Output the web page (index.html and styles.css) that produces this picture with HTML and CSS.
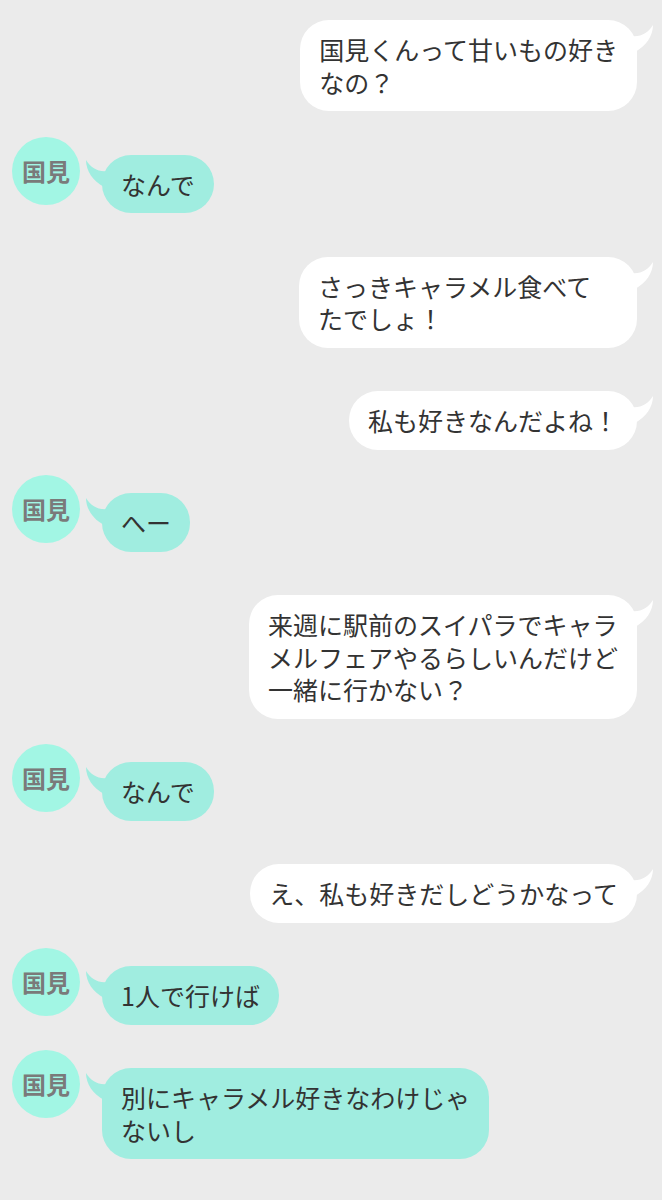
FILE: index.html
```html
<!DOCTYPE html>
<html lang="ja">
  <head>
    <meta charset="utf-8">
    <title>トーク</title>
    <link rel="stylesheet" href="styles.css">
  </head>
  <body>
    <div class="chat">
      <div class="row me">
        <div class="bubble">国見くんって甘いもの好き<br>なの？<svg class="tail" viewBox="0 0 28 30"><path d="M0 12 C10 17 21 13 27 3 C27 14 20 24 9 30 L0 30 Z"/></svg></div>
      </div>

      <div class="row them">
        <div class="avatar">国見</div>
        <div class="bubble">なんで<svg class="tail" viewBox="0 0 28 30"><path d="M0 12 C10 17 21 13 27 3 C27 14 20 24 9 30 L0 30 Z"/></svg></div>
      </div>

      <div class="row me">
        <div class="bubble wide">さっきキャラメル食べて<br>たでしょ！<svg class="tail" viewBox="0 0 28 30"><path d="M0 12 C10 17 21 13 27 3 C27 14 20 24 9 30 L0 30 Z"/></svg></div>
      </div>

      <div class="row me">
        <div class="bubble">私も好きなんだよね！<svg class="tail" viewBox="0 0 28 30"><path d="M0 12 C10 17 21 13 27 3 C27 14 20 24 9 30 L0 30 Z"/></svg></div>
      </div>

      <div class="row them">
        <div class="avatar">国見</div>
        <div class="bubble">へー<svg class="tail" viewBox="0 0 28 30"><path d="M0 12 C10 17 21 13 27 3 C27 14 20 24 9 30 L0 30 Z"/></svg></div>
      </div>

      <div class="row me">
        <div class="bubble">来週に駅前のスイパラでキャラ<br>メルフェアやるらしいんだけど<br>一緒に行かない？<svg class="tail" viewBox="0 0 28 30"><path d="M0 12 C10 17 21 13 27 3 C27 14 20 24 9 30 L0 30 Z"/></svg></div>
      </div>

      <div class="row them">
        <div class="avatar">国見</div>
        <div class="bubble">なんで<svg class="tail" viewBox="0 0 28 30"><path d="M0 12 C10 17 21 13 27 3 C27 14 20 24 9 30 L0 30 Z"/></svg></div>
      </div>

      <div class="row me">
        <div class="bubble">え、私も好きだしどうかなって<svg class="tail" viewBox="0 0 28 30"><path d="M0 12 C10 17 21 13 27 3 C27 14 20 24 9 30 L0 30 Z"/></svg></div>
      </div>

      <div class="row them">
        <div class="avatar">国見</div>
        <div class="bubble">1人で行けば<svg class="tail" viewBox="0 0 28 30"><path d="M0 12 C10 17 21 13 27 3 C27 14 20 24 9 30 L0 30 Z"/></svg></div>
      </div>

      <div class="row them">
        <div class="avatar">国見</div>
        <div class="bubble">別にキャラメル好きなわけじゃ<br>ないし<svg class="tail" viewBox="0 0 28 30"><path d="M0 12 C10 17 21 13 27 3 C27 14 20 24 9 30 L0 30 Z"/></svg></div>
      </div>
    </div>
  </body>
</html>
```

FILE: styles.css
```css
body {
  margin: 0;
  background-color: #ebebeb;
  font-family: "Noto Sans CJK JP", "Noto Sans", sans-serif;
  color: #333;
}

.chat {
  display: flex;
  flex-direction: column;
  gap: 43.5px;
  padding: 20px 25px 40px 12px;
}

.row {
  display: flex;
  align-items: flex-start;
}

.row.me {
  justify-content: flex-end;
}

.bubble {
  position: relative;
  padding: 13px 19px;
  border-radius: 29px;
  font-size: 25px;
  line-height: 32.5px;
  white-space: nowrap;
}

.bubble.wide {
  width: 300px;
}

.me .bubble {
  background-color: #fff;
}

.them .bubble {
  background-color: #a0ede0;
}

.tail {
  position: absolute;
  top: 2px;
  width: 28px;
  height: 30px;
}

.me .tail {
  right: -17px;
  fill: #fff;
}

.them .tail {
  left: -17px;
  fill: #a0ede0;
  transform: scaleX(-1);
}

.avatar {
  flex: none;
  width: 68px;
  height: 68px;
  margin-top: -18px;
  margin-right: 22px;
  border-radius: 50%;
  background-color: #a2f6e4;
  color: #7a7a7a;
  font-size: 24px;
  font-weight: bold;
  line-height: 68px;
  text-align: center;
}
```
